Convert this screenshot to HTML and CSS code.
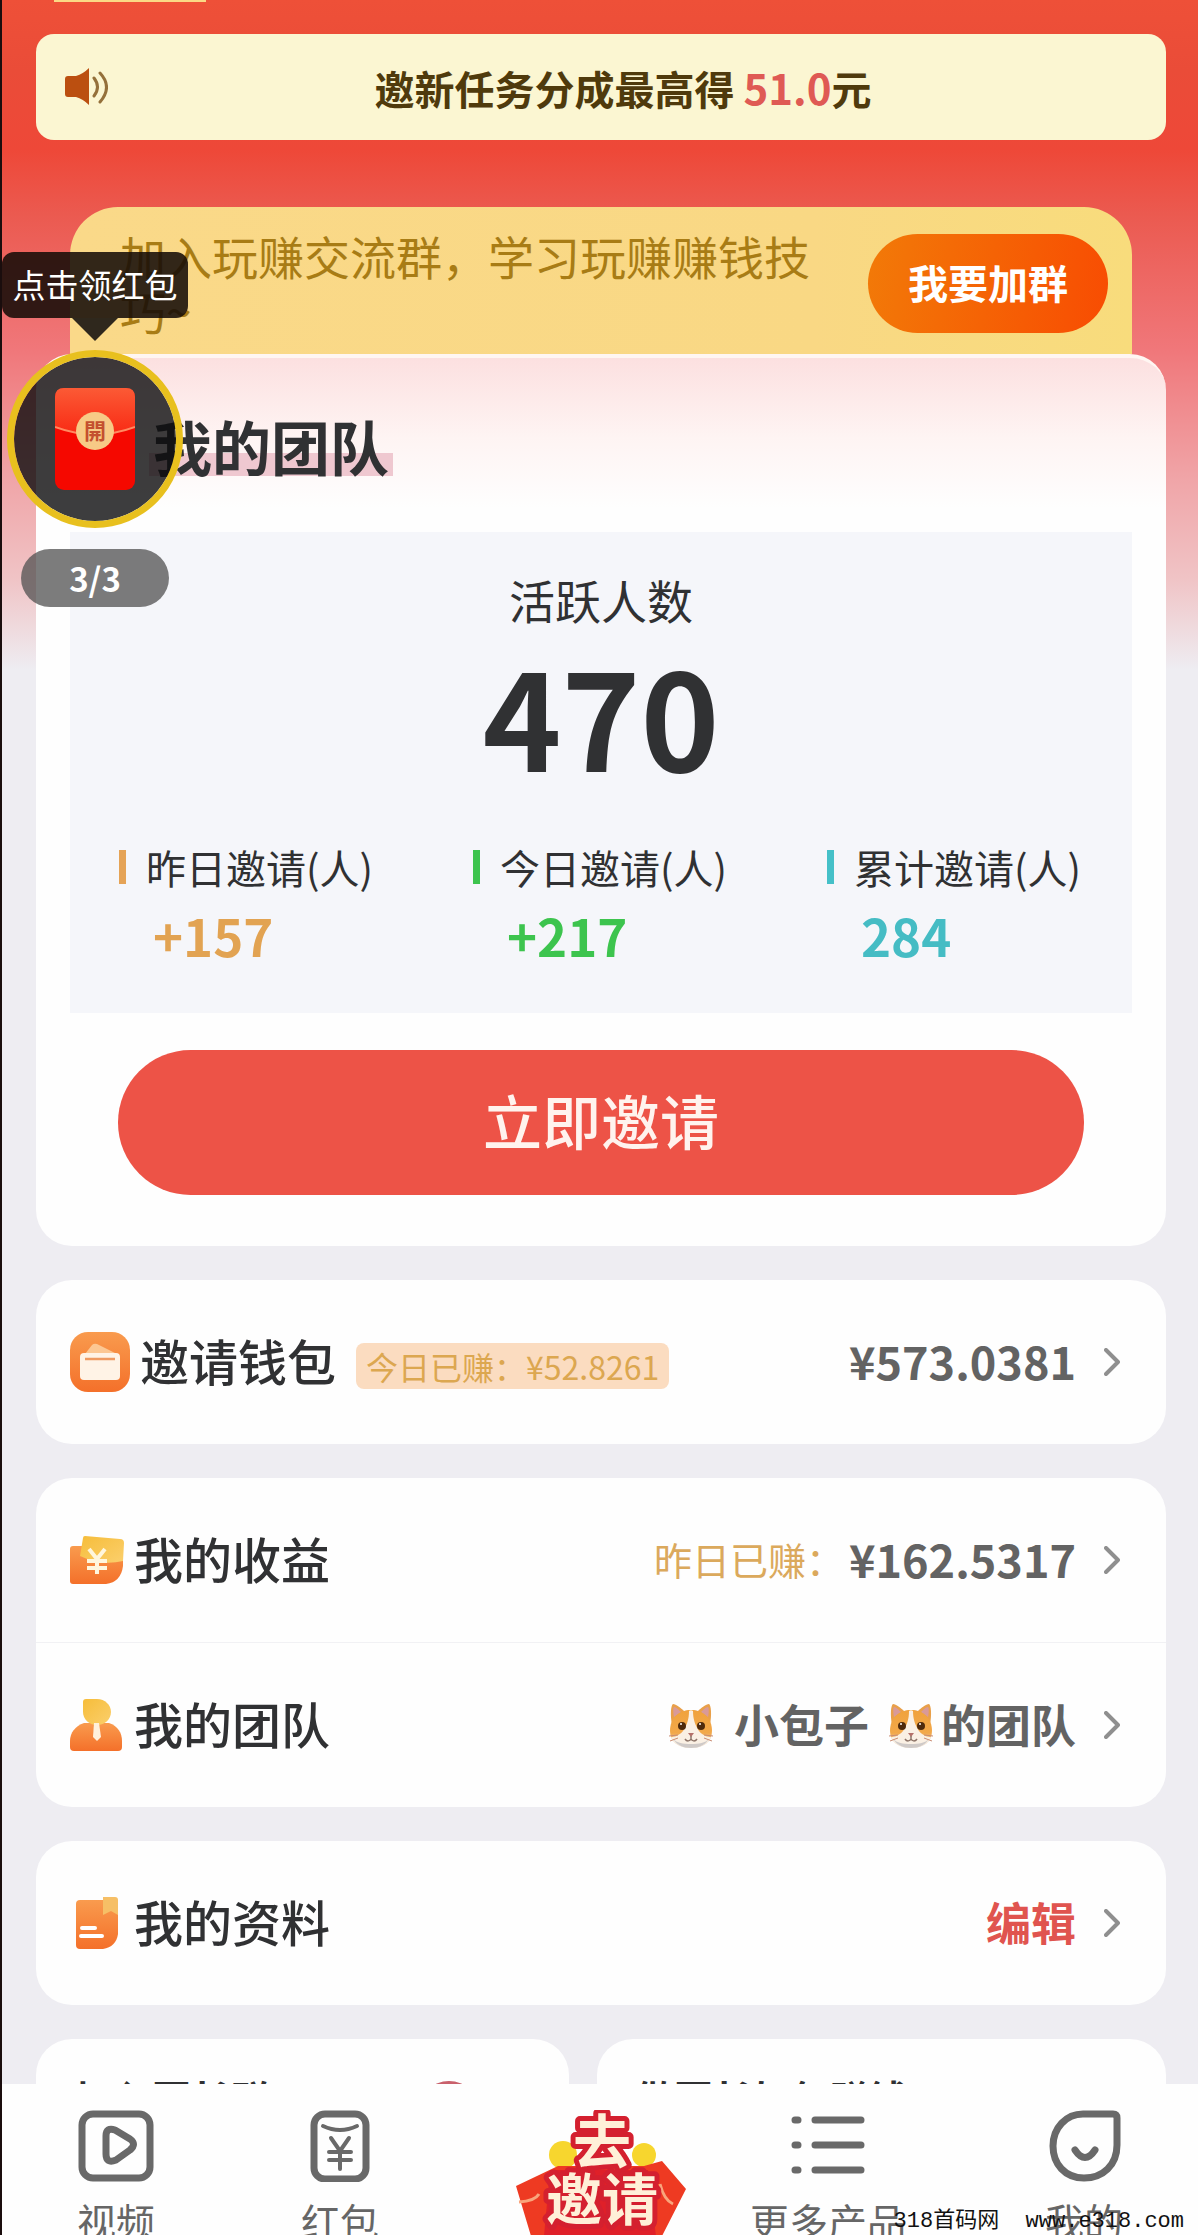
FILE: index.html
```html
<!DOCTYPE html>
<html lang="zh-CN">
<head>
    <meta charset="UTF-8">
    <meta name="viewport" content="width=device-width, initial-scale=1.0">
    <title>我的团队</title>
    <link rel="stylesheet" href="styles.css">
</head>
<body>
    <!-- Shared icons -->
    <svg class="defs" width="0" height="0" aria-hidden="true">
        <defs>
            <linearGradient id="orange" x1="0" y1="0" x2="0" y2="1">
                <stop offset="0" stop-color="#f99b4e"/>
                <stop offset="1" stop-color="#f4702a"/>
            </linearGradient>
            <linearGradient id="yellow" x1="0" y1="0" x2="1" y2="1">
                <stop offset="0" stop-color="#f6bd3a"/>
                <stop offset="1" stop-color="#fbcf6c"/>
            </linearGradient>
            <linearGradient id="fur" x1="0" y1="0" x2="0" y2="1">
                <stop offset="0" stop-color="#f0a23c"/>
                <stop offset="0.6" stop-color="#f2a84a"/>
                <stop offset="1" stop-color="#e8d9cc"/>
            </linearGradient>
            <linearGradient id="packet" x1="0" y1="0" x2="0" y2="1">
                <stop offset="0" stop-color="#fb5a35"/>
                <stop offset="1" stop-color="#f92a14"/>
            </linearGradient>
        </defs>
        <symbol id="icon-arrow" viewBox="0 0 16 28">
            <path d="M2 2l12 12L2 26" fill="none" stroke="#8f8f8f" stroke-width="4" stroke-linecap="round" stroke-linejoin="round"/>
        </symbol>
        <symbol id="icon-cat" viewBox="0 0 46 46">
            <path d="M4 22C2 11 3 2 5 1c3 0 8 4 11 7 4-1 10-1 14 0 3-3 8-7 11-7 2 1 3 10 1 21z" fill="#e9a04a"/>
            <path d="M6 14c-1-5-1-9 0-10 2 0 5 3 7 5zM40 14c1-5 1-9 0-10-2 0-5 3-7 5z" fill="#d99a98"/>
            <path d="M23 7C10 7 2 16 2 28c0 11 9 17 21 17s21-6 21-17C44 16 36 7 23 7z" fill="url(#fur)"/>
            <path d="M21 8c0 8-2 14-6 20-4 5-9 6-12 6 3 7 10 11 20 11s17-4 20-11c-3 0-8-1-12-6-4-6-6-12-6-20-1-1-3-1-4 0z" fill="#faf0e4"/>
            <path d="M5 36c4 6 10 9 18 9s14-3 18-9c-4 4-10 5-18 5S9 40 5 36z" fill="#cfcac8"/>
            <circle cx="14" cy="23" r="4" fill="#4e2a0c"/>
            <circle cx="33" cy="23" r="4" fill="#4e2a0c"/>
            <circle cx="13" cy="21" r="1" fill="#fff"/>
            <circle cx="32" cy="21" r="1" fill="#fff"/>
            <path d="M20 30h6l-3 4z" fill="#b3706a"/>
            <path d="M23 33v3m-6 0c2 3 5 2 6 0 1 2 4 3 6 0" fill="none" stroke="#8d7468" stroke-width="1.500"/>
            <path d="M1 33l9-1M2 38l8-3M45 33l-9-1M44 38l-8-3" stroke="#c98b72" stroke-width="1"/>
        </symbol>
    </svg>

    <div class="app">
        <main class="page">
            <div class="top-tab"></div>

            <div class="notice">
                <svg class="notice-icon" viewBox="0 0 44 38" aria-hidden="true">
                    <path d="M4 8h8q7-2 13-8v37q-6-6-13-8H4q-3 0-3-3V11q0-3 3-3z" fill="#bb4f10"/>
                    <path d="M30 10q7 9 0 18M36 5q13 14 0 29" fill="none" stroke="#94703a" stroke-width="3" stroke-linecap="round"/>
                </svg>
                <p class="notice-text">邀新任务分成最高得 <span class="notice-money">51.0</span>元</p>
            </div>

            <section class="group">
                <p class="group-text">加入玩赚交流群，学习玩赚赚钱技巧~</p>
                <button class="group-btn" type="button">我要加群</button>
            </section>

            <section class="card team">
                <h1 class="team-title">我的团队</h1>
                <div class="stats">
                    <p class="stats-label">活跃人数</p>
                    <p class="stats-total">470</p>
                    <div class="stats-cols">
                        <div class="stat stat-orange">
                            <p class="stat-name">昨日邀请(人)</p>
                            <p class="stat-value">+157</p>
                        </div>
                        <div class="stat stat-green">
                            <p class="stat-name">今日邀请(人)</p>
                            <p class="stat-value">+217</p>
                        </div>
                        <div class="stat stat-cyan">
                            <p class="stat-name">累计邀请(人)</p>
                            <p class="stat-value">284</p>
                        </div>
                    </div>
                </div>
                <button class="invite-btn" type="button">立即邀请</button>
            </section>

            <section class="card">
                <a class="row" href="#">
                    <svg class="row-icon row-icon-lg" viewBox="0 0 60 60" aria-hidden="true">
                        <rect width="60" height="60" rx="18" fill="url(#orange)"/>
                        <path d="M15 22l7-9q2-2 5-1l18 9v4H15z" fill="#fcc793"/>
                        <rect x="10" y="21" width="40" height="27" rx="4" fill="#fff3e6"/>
                        <path d="M15 27h30" stroke="#ef9a62" stroke-width="2.500"/>
                    </svg>
                    <span class="row-name">邀请钱包</span>
                    <span class="tag">今日已赚：¥52.8261</span>
                    <span class="row-value">¥573.0381</span>
                    <svg class="arrow" aria-hidden="true"><use href="#icon-arrow"/></svg>
                </a>
            </section>

            <section class="card">
                <a class="row" href="#">
                    <svg class="row-icon" viewBox="0 0 54 52" aria-hidden="true">
                        <path d="M3 12h16l34 14v6q-2 16-17 18H3q-3 0-3-3V15q0-3 3-3z" fill="url(#orange)"/>
                        <path d="M15 2l35 3q4 0 4 4l-1 18q-22 5-43-5l3-18q0-2 2-2z" fill="url(#yellow)"/>
                        <path d="M19 15l8 10 8-10M27 25v15M17 27h20M17 34h20" fill="none" stroke="#fff6dd" stroke-width="4"/>
                    </svg>
                    <span class="row-name">我的收益</span>
                    <span class="row-value"><span class="row-hint">昨日已赚：</span>¥162.5317</span>
                    <svg class="arrow" aria-hidden="true"><use href="#icon-arrow"/></svg>
                </a>
                <a class="row" href="#">
                    <svg class="row-icon" viewBox="0 0 54 52" aria-hidden="true">
                        <path d="M14 24h25c9 3 13 10 13 18v6q0 4-4 4H4q-4 0-4-4v-6c0-8 5-15 14-18z" fill="url(#orange)"/>
                        <path d="M16 0h11c8 0 14 6 14 13s-6 13-14 13-14-6-14-13V3q0-3 3-3z" fill="url(#yellow)"/>
                        <path d="M24 24h5l2 14-4 4-4-4z" fill="#fff1dc"/>
                    </svg>
                    <span class="row-name">我的团队</span>
                    <span class="row-value">
                        <svg class="cat" aria-hidden="true"><use href="#icon-cat"/></svg>
                        <span class="nick">小包子</span>
                        <svg class="cat" aria-hidden="true"><use href="#icon-cat"/></svg>的团队
                    </span>
                    <svg class="arrow" aria-hidden="true"><use href="#icon-arrow"/></svg>
                </a>
            </section>

            <section class="card">
                <a class="row" href="#">
                    <svg class="row-icon" viewBox="0 0 54 52" aria-hidden="true">
                        <path d="M10 3h38v34q-2 13-15 15H10q-4 0-4-4V7q0-4 4-4z" fill="url(#orange)"/>
                        <path d="M33 0h12q3 0 3 3v15l-7-4-8 4z" fill="#f6bf66"/>
                        <path d="M12 31h13M11 39h21" stroke="#fff" stroke-width="4" stroke-linecap="round"/>
                    </svg>
                    <span class="row-name">我的资料</span>
                    <span class="row-value row-edit">编辑</span>
                    <svg class="arrow" aria-hidden="true"><use href="#icon-arrow"/></svg>
                </a>
            </section>

            <div class="more">
                <a class="card more-card" href="#">加入团长群<span class="more-badge"></span></a>
                <a class="card more-card" href="#">做团长如何赚钱</a>
            </div>

            <!-- Red packet floating widget -->
            <aside class="float">
                <span class="float-tip">点击领红包</span>
                <button class="float-btn" type="button" aria-label="领红包">
                    <svg class="packet" viewBox="0 0 80 102" aria-hidden="true">
                        <rect width="80" height="102" rx="9" fill="#f50800"/>
                        <path d="M0 39V9q0-9 9-9h62q9 0 9 9v30q-40 15-80 0z" fill="url(#packet)"/>
                        <path d="M0 39q40 15 80 0" fill="none" stroke="#ff8a61" stroke-width="2"/>
                        <circle cx="40" cy="43" r="19" fill="#f7ca86"/>
                        <text x="40" y="51" text-anchor="middle" class="packet-text">開</text>
                    </svg>
                </button>
                <span class="float-count">3/3</span>
            </aside>
        </main>

        <!-- Bottom Navigation Bar -->
        <nav class="tabbar">
            <a class="tab" href="#">
                <svg class="tab-icon" viewBox="0 0 76 72" aria-hidden="true">
                    <rect x="4" y="4" width="68" height="64" rx="11"/>
                    <path d="M28 26q0-9 9-6l15 9q7 5 0 11l-14 10q-10 4-10-6z"/>
                </svg>
                视频
            </a>
            <a class="tab" href="#">
                <svg class="tab-icon" viewBox="0 0 76 72" aria-hidden="true">
                    <rect x="12" y="4" width="52" height="65" rx="11"/>
                    <path class="thin" d="M21 16q17 8 34 0M29 28l9 13 9-13M38 41v18M27 42h22M27 50h22"/>
                </svg>
                红包
            </a>
            <a class="tab" href="#" aria-label="去邀请">
                <svg class="invite-icon" viewBox="0 0 172 126" aria-hidden="true">
                    <circle cx="49" cy="45" r="14" fill="#f7d62e"/>
                    <circle cx="130" cy="45" r="12" fill="#f7d62e"/>
                    <path d="M2 76l42-20h86l18-5 24 28-24 47H17z" fill="#ee3a22"/>
                    <path d="M36 60h98l8 66H30z" fill="#df2029"/>
                    <path d="M5 92q16-1 20-8M146 74q4 16 13 20" fill="none" stroke="#f9a57c" stroke-width="3"/>
                    <text x="88" y="53" text-anchor="middle" class="invite-go">去</text>
                    <text x="88" y="110" text-anchor="middle" class="invite-word">邀请</text>
                </svg>
            </a>
            <a class="tab" href="#">
                <svg class="tab-icon" viewBox="0 0 76 72" aria-hidden="true">
                    <path d="M5 10h3M5 35h3M5 60h3M25 10h46M25 35h46M25 60h46"/>
                </svg>
                更多产品
            </a>
            <a class="tab" href="#">
                <svg class="tab-icon" viewBox="0 0 76 72" aria-hidden="true">
                    <path d="M37 4h30q4 0 4 4v27c0 20-14 33-33 33S7 54 7 36 20 4 37 4z"/>
                    <path d="M29 40q10 15 20 0"/>
                </svg>
                我的
            </a>
        </nav>
        <div class="watermark">318首码网&nbsp; www.e318.com</div>
    </div>
</body>
</html>
```

FILE: styles.css
```css
/* General Styles */
* {
    margin: 0;
    padding: 0;
    box-sizing: border-box;
}

body {
    font-family: "Noto Sans CJK SC", sans-serif;
    color: #303133;
    height: 100vh;
    overflow: hidden;
}

a {
    color: inherit;
    text-decoration: none;
}

button {
    border: none;
    font-family: inherit;
    cursor: pointer;
}

.defs {
    position: absolute;
}

.app {
    height: 100vh;
    display: flex;
    flex-direction: column;
    position: relative;
    border-left: 2px solid #1a0d0d;
}

.page {
    flex: 1;
    min-height: 0;
    overflow: hidden;
    position: relative;
    padding: 34px 32px 0 34px;
    background: linear-gradient(#ee5038 0, #ea4c38 70px, #ee4838 150px, #eb5a50 215px, #f0777a 350px, #f0a5a8 480px, #f0c4c6 580px, #eeedf2 670px);
}

.top-tab {
    position: absolute;
    top: 0;
    left: 52px;
    width: 152px;
    height: 2px;
    background: #fbd985;
}

/* Notice */
.notice {
    display: flex;
    align-items: center;
    height: 106px;
    padding: 0 28px;
    background: #fbf6d2;
    border-radius: 18px;
}

.notice-icon {
    width: 44px;
    height: 38px;
}

.notice-text {
    flex: 1;
    padding-bottom: 2px;
    text-align: center;
    font-size: 40px;
    font-weight: bold;
    color: #4f3a0c;
}

.notice-money {
    color: #df5a54;
    font-size: 42px;
}

/* Join group */
.group {
    display: flex;
    align-items: flex-start;
    justify-content: space-between;
    height: 147px;
    margin: 67px 34px 0;
    padding: 21px 24px 0 50px;
    overflow: hidden;
    background: linear-gradient(90deg, #fad989, #f9d884 70%, #f8dc7c);
    border-radius: 48px 48px 0 0;
}

.group-text {
    flex: 1;
    max-width: 700px;
    font-size: 46px;
    line-height: 55px;
    color: #a87c15;
}

.group-btn {
    width: 240px;
    height: 99px;
    margin-top: 6px;
    padding-bottom: 4px;
    border-radius: 50px;
    background: linear-gradient(100deg, #f27a08, #f84c02);
    color: #fff;
    font-size: 40px;
    font-weight: bold;
}

/* Cards */
.card {
    display: block;
    margin-bottom: 34px;
    background: #fefefe;
    border-radius: 36px;
}

.team {
    padding: 44px 34px 51px;
    border-top: 4px solid #fff6f2;
    background: linear-gradient(#fce0e0, #fef4f3 80px, #fefefe 150px);
}

.team-title {
    width: fit-content;
    margin: 0 0 42px 79px;
    padding: 0 4px;
    font-size: 59px;
    line-height: 88px;
    background: linear-gradient(transparent 51px, #efc8d0 51px, #efc8d0 74px, transparent 74px);
}

.stats {
    padding: 34px 0 40px;
    background: #f5f6fa;
    text-align: center;
}

.stats-label {
    font-size: 46px;
    line-height: 66px;
}

.stats-total {
    font-size: 134px;
    font-weight: bold;
    line-height: 164px;
}

.stats-cols {
    display: grid;
    grid-template-columns: repeat(3, 1fr);
    margin-top: 41px;
    text-align: left;
}

.stat {
    padding-left: 49px;
}

.stat-name {
    display: flex;
    align-items: center;
    gap: 20px;
    font-size: 40px;
    line-height: 60px;
    white-space: nowrap;
}

.stat-name::before {
    content: '';
    width: 7px;
    height: 34px;
}

.stat-value {
    padding-left: 34px;
    font-size: 51px;
    font-weight: bold;
    line-height: 76px;
}

.stat-orange .stat-name::before {
    background: #e5a356;
}

.stat-orange .stat-value {
    color: #e2a352;
}

.stat-green .stat-name::before {
    background: #3dc44e;
}

.stat-green .stat-value {
    color: #3dc44e;
}

.stat-cyan .stat-name::before {
    background: #45c0c8;
}

.stat-cyan .stat-value {
    color: #45bcc4;
}

.invite-btn {
    display: block;
    width: calc(100% - 96px);
    height: 145px;
    margin: 37px 48px 0;
    padding-bottom: 6px;
    border-radius: 73px;
    background: #ed5347;
    color: #fff3ee;
    font-size: 59px;
    font-weight: 500;
}

/* List rows */
.row {
    display: flex;
    align-items: center;
    height: 164px;
    padding: 0 46px 0 34px;
}

.row + .row {
    height: 165px;
    border-top: 1px solid #f1f1f4;
}

.row-icon {
    width: 54px;
    height: 52px;
}

.row-icon-lg {
    width: 60px;
    height: 60px;
}

.row-name {
    margin-left: 10px;
    padding-bottom: 6px;
    font-size: 49px;
    font-weight: 500;
}

.tag {
    margin: 8px 0 0 20px;
    padding: 0 10px;
    border-radius: 8px;
    background: #fbdcc0;
    color: #dca750;
    font-size: 32px;
    line-height: 46px;
}

.row-value {
    display: flex;
    align-items: center;
    margin-left: auto;
    padding-bottom: 4px;
    color: #636363;
    font-size: 45px;
    font-weight: bold;
}

.row-hint {
    margin-right: 5px;
    color: #dba95c;
    font-size: 38px;
    font-weight: normal;
}

.row-edit {
    color: #e0544f;
}

.cat {
    width: 46px;
    height: 46px;
    margin: 6px 7px 0 0;
}

.nick {
    margin: 0 19px 0 13px;
}

.arrow {
    width: 16px;
    height: 28px;
    margin-left: 28px;
}

.more {
    display: grid;
    grid-template-columns: 534fr 570fr;
    gap: 28px;
}

.more-card {
    display: flex;
    justify-content: space-between;
    height: 180px;
    padding: 30px 90px 0 38px;
    font-size: 39px;
    font-weight: bold;
}

.more-badge {
    width: 60px;
    height: 60px;
    margin-top: 12px;
    border-radius: 50%;
    background: #c9616c;
}

/* Floating red packet */
.float {
    position: absolute;
    top: 252px;
    left: 0;
    width: 186px;
    display: flex;
    flex-direction: column;
    align-items: center;
}

.float-tip {
    position: relative;
    width: 100%;
    padding-bottom: 2px;
    border-radius: 12px;
    background: rgba(22, 12, 8, 0.88);
    color: #fff;
    font-size: 33px;
    line-height: 64px;
    text-align: center;
}

.float-tip::after {
    content: '';
    position: absolute;
    top: 100%;
    left: 50%;
    margin-left: -23px;
    border: 23px solid transparent;
    border-top-color: #2f281d;
    border-bottom: none;
}

.float-btn {
    display: flex;
    align-items: center;
    justify-content: center;
    width: 176px;
    height: 178px;
    margin-top: 32px;
    border: 7px solid #e8c01e;
    border-radius: 50%;
    background: rgba(12, 12, 14, 0.8);
    background-clip: padding-box;
}

.packet {
    width: 80px;
    height: 102px;
}

.packet-text {
    font-size: 22px;
    font-weight: bold;
    fill: #c4502f;
}

.float-count {
    width: 148px;
    margin-top: 21px;
    border-radius: 29px;
    background: rgba(80, 80, 80, 0.75);
    color: #fff;
    font-size: 33px;
    font-weight: bold;
    line-height: 58px;
    text-align: center;
}

/* Bottom Navigation Bar */
.tabbar {
    display: grid;
    grid-template-columns: 100fr 348fr 172fr 284fr 228fr;
    height: 151px;
    padding: 26px 0 0 64px;
    overflow: hidden;
    background: #fefefe;
}

.tab {
    display: flex;
    flex-direction: column;
    align-items: center;
    gap: 8px;
    color: #666;
    font-size: 39px;
    line-height: 60px;
    white-space: nowrap;
}

.tab-icon {
    flex-shrink: 0;
    width: 76px;
    height: 72px;
    fill: none;
    stroke: #696969;
    stroke-width: 7;
    stroke-linecap: round;
    stroke-linejoin: round;
}

.tab-icon .thin {
    stroke-width: 4;
}

.invite-icon {
    flex-shrink: 0;
    width: 172px;
    height: 126px;
}

.invite-go,
.invite-word {
    font-size: 56px;
    font-weight: bold;
    fill: #fff0d8;
    stroke: #d4202f;
    stroke-width: 10;
    stroke-linejoin: round;
    paint-order: stroke;
}

.invite-go {
    font-size: 58px;
}

.watermark {
    position: absolute;
    right: 14px;
    bottom: 0;
    color: #111;
    font-family: "Liberation Mono", "Noto Sans CJK SC", monospace;
    font-size: 22px;
    line-height: 26px;
}
```
